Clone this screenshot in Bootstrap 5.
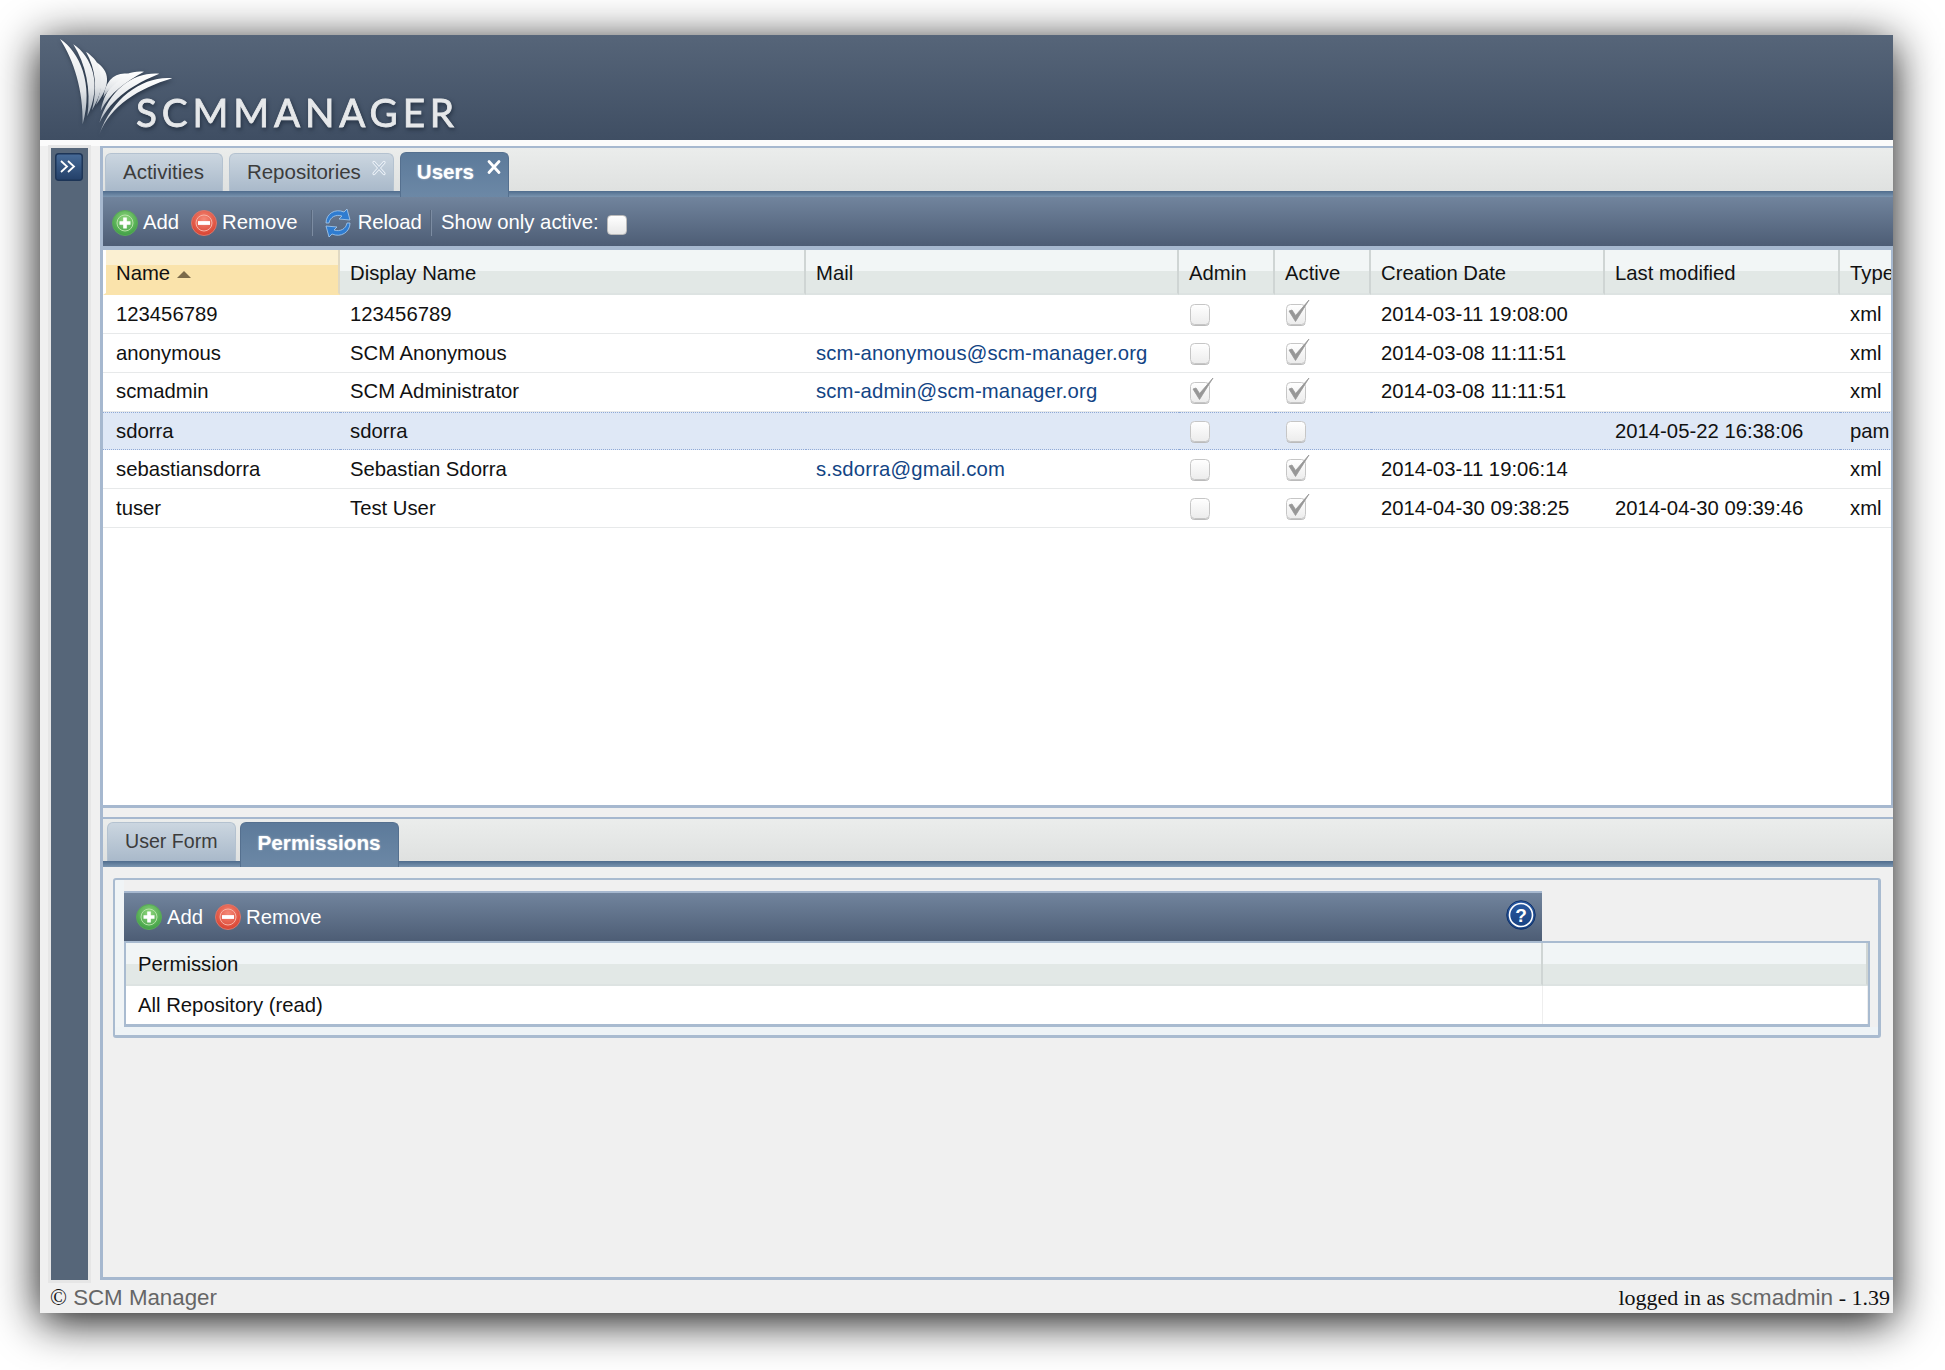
<!DOCTYPE html>
<html lang="en">
<head>
<meta charset="utf-8">
<title>SCM Manager</title>
<link href="https://cdn.jsdelivr.net/npm/bootstrap@5.3.0/dist/css/bootstrap.min.css" rel="stylesheet">
<style>
html,body{height:100%;}
body{background:#fff;margin:0;padding:35px 52px 57px 40px;font-family:"Liberation Sans",Arial,sans-serif;font-size:20.3px;color:#111;overflow:hidden;}
.app-window{height:1278px;background:#f0f0f0;box-shadow:0 8px 42px rgba(0,0,0,.95);}
.app-head{height:105px;background:linear-gradient(#566579,#3f4e63);flex:none;}
.logo-word{font-family:"Lato","Open Sans",sans-serif;font-size:116px;fill:#e6e8ea;stroke:#e6e8ea;stroke-width:2.5px;}
.logo-art{filter:drop-shadow(1px 2px 2px rgba(10,20,35,.55));}
.app-strip{height:6px;background:#fbfbfb;flex:none;}
.app-body{min-height:0;}
.side-rail{width:37px;margin:2px 12px 0 11px;background:#566679;outline:3px solid #e6e6e6;position:relative;padding:5px 0 0 4px;flex:none;}
.main-panel{border:solid #a6b8cf;border-width:2px 0 3px 3px;min-width:0;}
.tab-bar{height:43px;background:linear-gradient(#ebedec,#dfe1e0);padding-left:2px;flex:none;}
.tab-bar .nav-item{margin-right:6px;}
.tab-bar.lower{height:42px;padding-left:4px;}
.tab-bar.lower .nav-item{margin-right:4px;}
.tab-bar .nav-link{position:relative;height:38px;margin-top:5px;padding:0 18px 0 17px;display:flex;align-items:center;font-size:20.5px;color:#3c3c3c;border:1px solid #b4c2d0;border-bottom:0;border-radius:6px 6px 0 0;background:linear-gradient(#cbd6e0,#a9b9ca);}
.tab-bar.lower .nav-link{margin-top:3px;height:39px;font-size:19.6px;padding:0 17px;}
.tab-bar .nav-link.closable{padding-right:32px;}
.tab-bar .nav-link.on{height:39px;margin-top:4px;padding-left:16px;color:#fff;font-weight:700;border-color:#55708f;background:linear-gradient(#5c7a9a,#6c88a6);text-shadow:0 0 2px rgba(255,255,255,.6);}
.tab-bar.lower .nav-link.on{margin-top:3px;height:45px;margin-bottom:-6px;position:relative;z-index:1;font-size:20.7px;padding:0 17px 5px;}
.tab-bar .nav-link.on.first-tab{height:45px;margin-bottom:-6px;z-index:1;padding-bottom:6px;padding-right:34px;}
.tab-x{position:absolute;right:6px;top:6px;width:16px;height:16px;}
.tab-strip{height:6px;flex:none;background:linear-gradient(#4f6c8d,#7b95b0);}
.tool-bar{height:49px;padding:2px 0 0 9px;color:#fff;flex:none;background:linear-gradient(#71849d,#4d5d75);white-space:nowrap;}
.tool-bar.short{height:50px;width:1418px;padding:0 0 0 12px;border:solid #a6b8cf;border-width:2px 0 0 0;}
.tool-ico{width:26px;height:26px;margin-right:5px;flex:none;}
.tool-ico.wide{width:32px;height:32px;margin-right:4px;}
.tool-item{margin-right:12px;}
.tool-item.last-item{margin-right:7px;}
.tool-sep{width:1px;height:26px;background:#56667c;box-shadow:1px 0 0 #7c8ca2;margin:0 10px 0 1px;}
.tool-check.form-check-input{width:20px;height:20px;margin:4px 0 0 8px;border:1px solid #bbb;border-radius:4px;background:linear-gradient(#fff,#e8e8e8);float:none;}
.data-wrap{border:solid #a6b8cf;border-width:4px 2px 3px 0;background:#fff;height:562px;overflow:hidden;flex:none;}
.table.data-grid{table-layout:fixed;width:1837px;margin:0;background:#fff;border-collapse:separate;border-spacing:0;}
.table.data-grid>*>*>*{padding:0 0 0 10px;font-size:20.3px;color:#111;white-space:nowrap;overflow:hidden;background:transparent;box-shadow:none;vertical-align:middle;}
.table.data-grid>thead>tr>th{height:45px;padding-top:3px;font-weight:400;background:linear-gradient(#f2f6f6 50%,#e2e8e6 50%);border-bottom:2px solid #dde3e2;border-right:2px solid #cfd5d4;}
.table.data-grid>thead>tr>th.sort-col{padding-left:10px;background:linear-gradient(#fbf0d2 36%,#fae3ab 36%);border-left:3px solid #fff;border-bottom:2px solid #fae3ab;border-right:2px solid #e0d9c4;}
.table.data-grid>tbody>tr>td{height:38.85px;border-bottom:1.5px solid #e7e9ea;}
.table.data-grid>tbody>tr>td:first-child{padding-left:13px;}
.table.data-grid>tbody>tr.picked>td{background:#dfe8f6;border-top:1.5px dotted #8fa9d6;border-bottom:1.5px dotted #8fa9d6;}
.sort-mark{display:inline-block;width:0;height:0;margin-left:7px;border:solid transparent;border-width:0 7px 7px;border-bottom-color:#7b6a4a;vertical-align:2px;}
.data-grid a{color:#124484;text-decoration:none;letter-spacing:.15px;}
.cb-ico{width:28px;height:28px;display:block;margin:-3px 0 -1px -3px;}
.lower-pane{flex:1;min-height:0;margin-top:9px;border-top:2px solid #a6b8cf;}
.perm-box{margin:11px 12px 0 10px;height:160px;border:solid #a9bbd0;border-width:2px 3px 3px 2px;border-radius:3px;padding:11px 0 0 9px;background:linear-gradient(90deg,#f0f4f6 9px,#f0f0f0 9px);position:relative;}
.perm-tail{height:8px;margin-left:-9px;background:#eef3f6;}
.perm-help{position:absolute;top:20px;left:1391px;width:30px;height:30px;}
.perm-grid-wrap{width:1746px;border:solid #a9bbd0;border-width:2px 2px 3px 2px;background:#fff;}
.table.perm-grid{table-layout:fixed;width:100%;margin:0;border-collapse:separate;border-spacing:0;}
.table.perm-grid>*>*>*{padding:0 0 0 12px;font-size:20.3px;color:#111;background:transparent;box-shadow:none;white-space:nowrap;vertical-align:middle;}
.table.perm-grid>thead>tr>th{height:43px;padding-top:2px;font-weight:400;background:linear-gradient(#f1f5f6 50%,#e2e8e6 50%);border-bottom:2px solid #dde3e2;border-right:2px solid #cfd5d4;}
.table.perm-grid>tbody>tr>td{height:38px;border-bottom:0;border-right:1px solid #eee;}
.foot-line{height:33px;flex:none;padding:2px 3px 0 10px;}
.foot-sans{font-size:22.3px;color:#666;}
.foot-mark{font-family:"Liberation Serif",serif;color:#111;}
.foot-serif{font-family:"Liberation Serif",serif;font-size:22px;color:#111;}
.foot-serif span{font-family:"Liberation Sans",sans-serif;font-size:22.6px;color:#666;}
</style>
</head>
<body>
<svg width="0" height="0" class="d-block" aria-hidden="true">
<defs>
<radialGradient id="gGreen" cx="50%" cy="35%" r="65%"><stop offset="0" stop-color="#8fd67c"/><stop offset="1" stop-color="#3f9f45"/></radialGradient>
<radialGradient id="gRed" cx="50%" cy="35%" r="65%"><stop offset="0" stop-color="#f58a78"/><stop offset="1" stop-color="#d9412f"/></radialGradient>
<linearGradient id="gHelp" x1="0" y1="0" x2="0" y2="1"><stop offset="0" stop-color="#2a5aa3"/><stop offset="1" stop-color="#17407f"/></linearGradient>
<linearGradient id="gBtn" x1="0" y1="0" x2="0" y2="1"><stop offset="0" stop-color="#476b98"/><stop offset="1" stop-color="#233f68"/></linearGradient>
<linearGradient id="gFeather" x1="0" y1="0" x2="0" y2="1"><stop offset="0" stop-color="#fff"/><stop offset=".6" stop-color="#e2e5e8"/><stop offset="1" stop-color="#9aa5b2"/></linearGradient>
<linearGradient id="gBox" x1="0" y1="0" x2="0" y2="1"><stop offset="0" stop-color="#fff"/><stop offset="1" stop-color="#ececec"/></linearGradient>
<symbol id="icoAdd" viewBox="0 0 26 26"><circle cx="13" cy="13" r="12.5" fill="url(#gGreen)" stroke="#5aa85a"/><circle cx="13" cy="13" r="8" fill="none" stroke="#b6e3a8" stroke-width="1"/><path d="M13 7.5v11M7.5 13h11" stroke="#fff" stroke-width="3.6"/></symbol>
<symbol id="icoDel" viewBox="0 0 26 26"><circle cx="13" cy="13" r="12.5" fill="url(#gRed)" stroke="#d9786c"/><circle cx="13" cy="13" r="8" fill="none" stroke="#f7b3a6" stroke-width="1"/><path d="M7 13h12" stroke="#fff" stroke-width="3.8"/></symbol>
<symbol id="icoBox" viewBox="0 0 28 28"><rect x="4.5" y="5.5" width="19" height="20" rx="4" fill="url(#gBox)" stroke="#c6c6c6"/><path d="M5 24.5q0 2 4 2h10q4 0 4-2" fill="none" stroke="#bbb"/></symbol>
<symbol id="icoChk" viewBox="0 0 28 28"><rect x="4.5" y="5.5" width="19" height="20" rx="4" fill="url(#gBox)" stroke="#c6c6c6"/><path d="M5 24.5q0 2 4 2h10q4 0 4-2" fill="none" stroke="#bbb"/><path d="M7 12L13.5 22.5 27 1 13.6 16.5 10 11z" fill="#979797" stroke="#979797" stroke-width=".8" stroke-linejoin="round"/></symbol>
</defs>
</svg>
<div class="app-window d-flex flex-column">
  <header class="app-head">
    <svg class="logo-art" width="420" height="105" viewBox="0 0 1260 315" role="img" aria-label="SCM Manager logo">
      <g fill="url(#gFeather)">
        <path d="M60 12C118 50 162 145 128 268C130 165 102 78 60 12Z"/>
        <path d="M100 28C156 65 188 150 142 244C154 162 137 88 100 28Z"/>
        <path d="M138 50C186 82 208 138 156 226C172 158 168 104 138 50Z"/>
        <path d="M170 82C208 108 216 148 168 210C186 162 190 122 170 82Z"/>
        <path d="M397 130C312 122 218 185 178 298C212 212 296 160 397 130Z"/>
        <path d="M358 116C284 110 208 160 178 264C216 186 284 146 358 116Z"/>
        <path d="M312 110C250 104 198 145 182 228C210 172 258 140 312 110Z"/>
        <path d="M265 116C222 110 196 138 190 188C206 160 232 140 265 116Z"/>
      </g>
      <text class="logo-word" x="288" y="276" textLength="954" lengthAdjust="spacing">SCMMANAGER</text>
    </svg>
  </header>
  <div class="app-strip"></div>
  <div class="app-body d-flex flex-grow-1">
    <aside class="side-rail">
      <svg width="28" height="28" viewBox="0 0 28 28" class="d-block" aria-label="Expand"><rect x=".75" y=".75" width="26.5" height="26.5" rx="3" fill="url(#gBtn)" stroke="#1d3557" stroke-width="1.5"/><path d="M6 8l6 5.5L6 19M13 8l6 5.5-6 5.5" fill="none" stroke="#fff" stroke-width="1.8"/></svg>
    </aside>
    <main class="main-panel d-flex flex-column flex-grow-1">
      <ul class="nav tab-bar">
        <li class="nav-item"><a class="nav-link" href="#">Activities</a></li>
        <li class="nav-item"><a class="nav-link closable" href="#">Repositories<svg class="tab-x" viewBox="0 0 16 16"><path d="M3 2.5l10 11M13 2.5L3 13.5" stroke="#eef3f8" stroke-width="3.2" stroke-linecap="round"/><path d="M3 2.5l10 11M13 2.5L3 13.5" stroke="#b5c4d4" stroke-width="1.2" stroke-linecap="round"/></svg></a></li>
        <li class="nav-item"><a class="nav-link closable on first-tab" href="#">Users<svg class="tab-x" viewBox="0 0 16 16"><path d="M3 2.5l10 11M13 2.5L3 13.5" stroke="#fff" stroke-width="2.8" stroke-linecap="round"/></svg></a></li>
      </ul>
      <div class="tab-strip"></div>
      <div class="tool-bar d-flex align-items-center">
        <svg class="tool-ico"><use href="#icoAdd"/></svg><span class="tool-item">Add</span>
        <svg class="tool-ico"><use href="#icoDel"/></svg><span class="tool-item">Remove</span>
        <span class="tool-sep"></span>
        <svg class="tool-ico wide" viewBox="0 0 32 32"><path d="M4 16C4 7 13 1 22 5l3-3 3 11-11-1 3-3c-6-2-12 1-13 7z" fill="#2f7cd0" stroke="#a8cdf0" stroke-width=".8"/><path d="M28 16c0 9-9 15-18 11l-3 3-3-11 11 1-3 3c6 2 12-1 13-7z" fill="#2f7cd0" stroke="#a8cdf0" stroke-width=".8"/></svg><span class="tool-item last-item">Reload</span>
        <span class="tool-sep"></span>
        <span>Show only active:</span><input class="form-check-input tool-check" type="checkbox" aria-label="Show only active">
      </div>
      <div class="data-wrap">
        <table class="table data-grid">
          <colgroup><col style="width:237px"><col style="width:466px"><col style="width:373px"><col style="width:96px"><col style="width:96px"><col style="width:234px"><col style="width:235px"><col style="width:100px"></colgroup>
          <thead><tr><th class="sort-col">Name<span class="sort-mark"></span></th><th>Display Name</th><th>Mail</th><th>Admin</th><th>Active</th><th>Creation Date</th><th>Last modified</th><th>Type</th></tr></thead>
          <tbody>
            <tr><td>123456789</td><td>123456789</td><td></td><td><svg class="cb-ico"><use href="#icoBox"/></svg></td><td><svg class="cb-ico"><use href="#icoChk"/></svg></td><td>2014-03-11 19:08:00</td><td></td><td>xml</td></tr>
            <tr><td>anonymous</td><td>SCM Anonymous</td><td><a href="#">scm-anonymous@scm-manager.org</a></td><td><svg class="cb-ico"><use href="#icoBox"/></svg></td><td><svg class="cb-ico"><use href="#icoChk"/></svg></td><td>2014-03-08 11:11:51</td><td></td><td>xml</td></tr>
            <tr><td>scmadmin</td><td>SCM Administrator</td><td><a href="#">scm-admin@scm-manager.org</a></td><td><svg class="cb-ico"><use href="#icoChk"/></svg></td><td><svg class="cb-ico"><use href="#icoChk"/></svg></td><td>2014-03-08 11:11:51</td><td></td><td>xml</td></tr>
            <tr class="picked"><td>sdorra</td><td>sdorra</td><td></td><td><svg class="cb-ico"><use href="#icoBox"/></svg></td><td><svg class="cb-ico"><use href="#icoBox"/></svg></td><td></td><td>2014-05-22 16:38:06</td><td>pam</td></tr>
            <tr><td>sebastiansdorra</td><td>Sebastian Sdorra</td><td><a href="#">s.sdorra@gmail.com</a></td><td><svg class="cb-ico"><use href="#icoBox"/></svg></td><td><svg class="cb-ico"><use href="#icoChk"/></svg></td><td>2014-03-11 19:06:14</td><td></td><td>xml</td></tr>
            <tr><td>tuser</td><td>Test User</td><td></td><td><svg class="cb-ico"><use href="#icoBox"/></svg></td><td><svg class="cb-ico"><use href="#icoChk"/></svg></td><td>2014-04-30 09:38:25</td><td>2014-04-30 09:39:46</td><td>xml</td></tr>
          </tbody>
        </table>
      </div>
      <section class="lower-pane d-flex flex-column">
        <ul class="nav tab-bar lower">
          <li class="nav-item"><a class="nav-link" href="#">User Form</a></li>
          <li class="nav-item"><a class="nav-link on" href="#">Permissions</a></li>
        </ul>
        <div class="tab-strip"></div>
        <div class="perm-box">
          <div class="tool-bar short d-flex align-items-center">
            <svg class="tool-ico"><use href="#icoAdd"/></svg><span class="tool-item">Add</span>
            <svg class="tool-ico"><use href="#icoDel"/></svg><span class="tool-item">Remove</span>
          </div>
          <svg class="perm-help" viewBox="0 0 30 30" role="img" aria-label="Help"><circle cx="15" cy="15" r="14.3" fill="url(#gHelp)" stroke="#12346c" stroke-width="1"/><circle cx="15" cy="15" r="11.5" fill="none" stroke="#fff" stroke-width="1.6"/><text x="15" y="21.5" text-anchor="middle" font-family="Liberation Sans, sans-serif" font-weight="700" font-size="19" fill="#fff">?</text></svg>
          <div class="perm-grid-wrap">
            <table class="table perm-grid">
              <colgroup><col style="width:1417px"><col></colgroup>
              <thead><tr><th>Permission</th><th></th></tr></thead>
              <tbody><tr><td>All Repository (read)</td><td></td></tr></tbody>
            </table>
          </div>
          <div class="perm-tail"></div>
        </div>
      </section>
    </main>
  </div>
  <footer class="foot-line d-flex justify-content-between align-items-center">
    <span class="foot-sans"><span class="foot-mark">©</span> SCM Manager</span>
    <span class="foot-serif">logged in as <span>scmadmin</span> - 1.39</span>
  </footer>
</div>
</body>
</html>
